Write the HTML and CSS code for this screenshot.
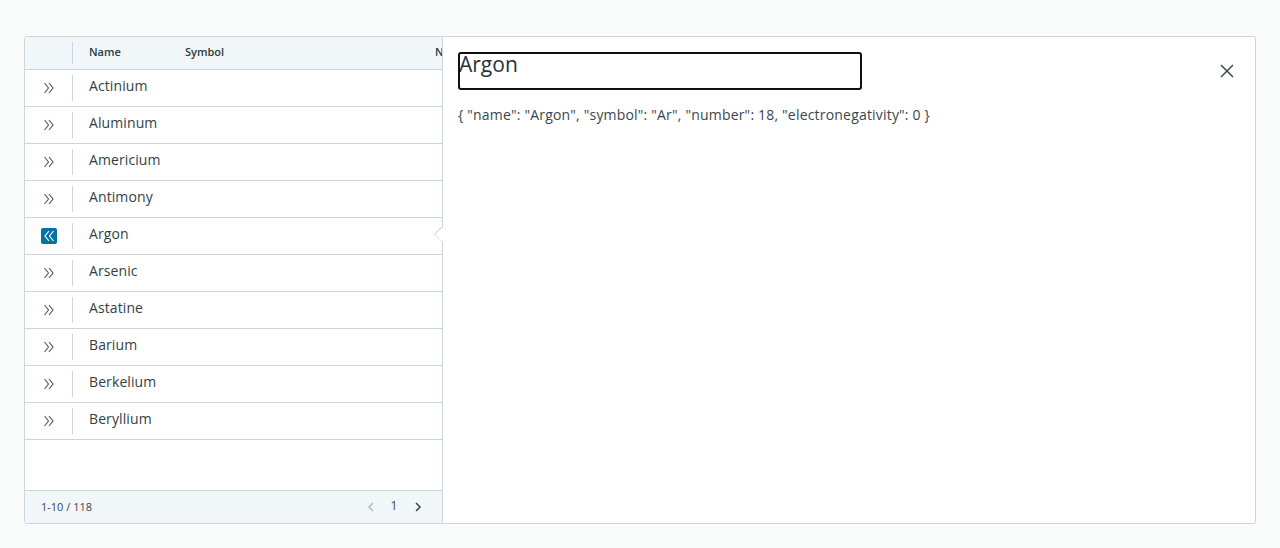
FILE: index.html
```html
<!DOCTYPE html>
<html lang="en">
<head>
<meta charset="utf-8">
<title>Elements</title>
<link rel="stylesheet" href="styles.css">
</head>
<body>
<div class="page">
  <div class="datagrid">
    <div class="grid">
      <div class="grid-header">
        <div class="expand-cell"></div>
        <div class="sep"></div>
        <div class="hcell name">Name</div>
        <div class="hcell symbol">Symbol</div>
        <div class="hcell number">Number</div>
      </div>
      <div class="rows">
        <div class="row"><div class="expand-cell"><svg class="dbl" viewBox="0 0 14 14"><polyline points="2.5,2 6.5,7 2.5,12"/><polyline points="7,2 11,7 7,12"/></svg></div><div class="sep"></div><div class="cell">Actinium</div></div>
        <div class="row"><div class="expand-cell"><svg class="dbl" viewBox="0 0 14 14"><polyline points="2.5,2 6.5,7 2.5,12"/><polyline points="7,2 11,7 7,12"/></svg></div><div class="sep"></div><div class="cell">Aluminum</div></div>
        <div class="row"><div class="expand-cell"><svg class="dbl" viewBox="0 0 14 14"><polyline points="2.5,2 6.5,7 2.5,12"/><polyline points="7,2 11,7 7,12"/></svg></div><div class="sep"></div><div class="cell">Americium</div></div>
        <div class="row"><div class="expand-cell"><svg class="dbl" viewBox="0 0 14 14"><polyline points="2.5,2 6.5,7 2.5,12"/><polyline points="7,2 11,7 7,12"/></svg></div><div class="sep"></div><div class="cell">Antimony</div></div>
        <div class="row"><div class="expand-cell"><span class="active-btn"><svg class="dbl-left" viewBox="0 0 16 16"><polyline points="8,3 4,8 8,13"/><polyline points="12.5,3 8.5,8 12.5,13"/></svg></span></div><div class="sep"></div><div class="cell">Argon</div></div>
        <div class="row"><div class="expand-cell"><svg class="dbl" viewBox="0 0 14 14"><polyline points="2.5,2 6.5,7 2.5,12"/><polyline points="7,2 11,7 7,12"/></svg></div><div class="sep"></div><div class="cell">Arsenic</div></div>
        <div class="row"><div class="expand-cell"><svg class="dbl" viewBox="0 0 14 14"><polyline points="2.5,2 6.5,7 2.5,12"/><polyline points="7,2 11,7 7,12"/></svg></div><div class="sep"></div><div class="cell">Astatine</div></div>
        <div class="row"><div class="expand-cell"><svg class="dbl" viewBox="0 0 14 14"><polyline points="2.5,2 6.5,7 2.5,12"/><polyline points="7,2 11,7 7,12"/></svg></div><div class="sep"></div><div class="cell">Barium</div></div>
        <div class="row"><div class="expand-cell"><svg class="dbl" viewBox="0 0 14 14"><polyline points="2.5,2 6.5,7 2.5,12"/><polyline points="7,2 11,7 7,12"/></svg></div><div class="sep"></div><div class="cell">Berkelium</div></div>
        <div class="row"><div class="expand-cell"><svg class="dbl" viewBox="0 0 14 14"><polyline points="2.5,2 6.5,7 2.5,12"/><polyline points="7,2 11,7 7,12"/></svg></div><div class="sep"></div><div class="cell">Beryllium</div></div>
      </div>
      <div class="spacer"></div>
      <div class="footer">
        <div class="count">1-10 / 118</div>
        <div class="pager">
          <svg class="chev disabled" viewBox="0 0 8 10"><polyline points="6,1 2,5 6,9"/></svg>
          <span class="page-num">1</span>
          <svg class="chev" viewBox="0 0 8 10"><polyline points="2,1 6,5 2,9"/></svg>
        </div>
      </div>
    </div>
    <div class="detail">
      <div class="caret"></div>
      <div class="detail-header">
        <h2 class="title">Argon</h2>
        <svg class="close" viewBox="0 0 14 14"><line x1="1" y1="1" x2="13" y2="13"/><line x1="13" y1="1" x2="1" y2="13"/></svg>
      </div>
      <p class="json">{ "name": "Argon", "symbol": "Ar", "number": 18, "electronegativity": 0 }</p>
    </div>
  </div>
</div>
</body>
</html>
```

FILE: styles.css
```css
html, body {
  margin: 0;
  padding: 0;
}
body {
  background: #f9fbfb;
  font-family: "Open Sans", "Liberation Sans", sans-serif;
  color: #313d44;
}
.page {
  padding: 36px 24px 24px 24px;
}
.datagrid {
  display: flex;
  height: 488px;
  box-sizing: border-box;
  border: 1px solid #ccd6db;
  border-radius: 3px;
  background: #fff;
  overflow: hidden;
}
.grid {
  width: 417px;
  display: flex;
  flex-direction: column;
  flex-shrink: 0;
}
.grid-header {
  height: 32px;
  background: #f1f6f8;
  border-bottom: 1px solid #ccd6db;
  display: flex;
  align-items: center;
  overflow: hidden;
  white-space: nowrap;
}
.expand-cell {
  width: 47px;
  flex-shrink: 0;
  display: flex;
  align-items: center;
  justify-content: center;
}
.sep {
  width: 1px;
  height: 22px;
  background: #ccd6db;
  flex-shrink: 0;
}
.row .sep {
  height: 26px;
}
.hcell {
  font-size: 11px;
  line-height: 15px;
  font-weight: 600;
  color: #2c3a42;
  flex-shrink: 0;
  padding-bottom: 4px;
}
.hcell.name {
  padding-left: 16px;
  width: 96px;
}
.hcell.symbol {
  width: 250px;
}
.row {
  height: 36px;
  border-bottom: 1px solid #ccd6db;
  display: flex;
  align-items: center;
}
.cell {
  padding-left: 16px;
  padding-bottom: 4px;
  font-size: 14px;
  line-height: 20px;
  letter-spacing: 0.1px;
  color: #333f46;
}
.dbl {
  width: 14px;
  height: 14px;
  fill: none;
  stroke: #4a555b;
  stroke-width: 1.1;
}
.active-btn {
  width: 16px;
  height: 16px;
  border-radius: 2px;
  background: #0072a3;
  display: flex;
}
.dbl-left {
  width: 16px;
  height: 16px;
  fill: none;
  stroke: #fff;
  stroke-width: 1.2;
}
.spacer {
  flex: 1;
}
.footer {
  height: 32px;
  border-top: 1px solid #ccd6db;
  background: #f1f6f8;
  display: flex;
  align-items: center;
  justify-content: space-between;
  padding: 0 20px 0 16px;
}
.count {
  font-size: 11px;
  line-height: 15px;
  padding-bottom: 2px;
  color: #3a464d;
}
.pager {
  display: flex;
  align-items: center;
}
.chev {
  width: 8px;
  height: 10px;
  fill: none;
  stroke: #3a464d;
  stroke-width: 1.5;
}
.chev.disabled {
  stroke: #b3bcc1;
}
.page-num {
  font-size: 12px;
  line-height: 16px;
  padding-bottom: 2px;
  color: #3a464d;
  width: 24px;
  text-align: center;
  margin: 0 8px 0 7px;
}
.detail {
  flex: 1;
  border-left: 1px solid #ccd6db;
  position: relative;
  padding: 15px 21px 0 15px;
  display: flex;
  flex-direction: column;
}
.caret {
  position: absolute;
  left: -7px;
  top: 192px;
  width: 11px;
  height: 11px;
  box-sizing: border-box;
  background: #fff;
  border-left: 1px solid #ccd6db;
  border-bottom: 1px solid #e6ecef;
  transform: rotate(45deg);
}
.detail-header {
  display: flex;
  justify-content: space-between;
  align-items: flex-start;
}
.title {
  margin: 0;
  width: 404px;
  height: 38px;
  box-sizing: border-box;
  outline: 2px solid #111;
  outline-offset: -2px;
  border-radius: 3px;
  font-size: 21px;
  font-weight: 400;
  line-height: 24px;
  color: #25323a;
  padding-left: 1px;
}
.close {
  width: 14px;
  height: 14px;
  margin-top: 12px;
  fill: none;
  stroke: #3a464d;
  stroke-width: 1.5;
}
.json {
  margin: 15px 0 0 0;
  font-size: 14px;
  line-height: 20px;
  letter-spacing: 0.19px;
  color: #3a464d;
}
```
